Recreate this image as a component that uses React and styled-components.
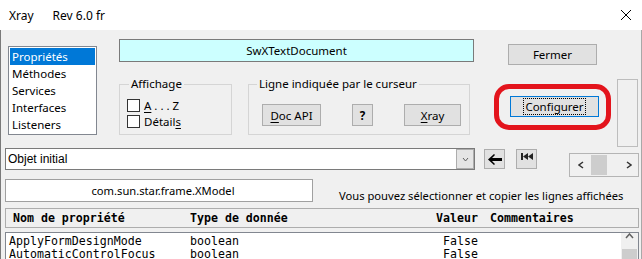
import React from "react";
import styled, { createGlobalStyle } from "styled-components";

const Global = createGlobalStyle`
  html, body { margin: 0; padding: 0; background: #f0f0f0; overflow: hidden; }
  body { font-family: "Noto Sans", "Open Sans", sans-serif; font-size: 11.5px; color: #000; }
  * { box-sizing: border-box; }
`;

const Window = styled.div`
  width: 642px;
  height: 259px;
  display: flex;
  flex-direction: column;
  overflow: hidden;
  background: #f0f0f0;
`;

const TitleBar = styled.div`
  height: 30px;
  flex: none;
  background: #fff;
  display: flex;
  align-items: center;
  padding-left: 9px;
  font-size: 12px;
`;

const TitleText = styled.span`
  margin-right: ${(p) => p.$gap || 0}px;
`;

const CloseIcon = styled.svg`
  margin-left: auto;
  margin-right: 11px;
  display: block;
`;

const Body = styled.div`
  flex: 1;
  border-left: 1px solid #7a7a7a;
  border-right: 1px solid #a8a8a8;
  display: flex;
  flex-direction: column;
`;

const TopSection = styled.div`
  display: flex;
  align-items: flex-start;
  height: 117px;
  flex: none;
`;

const ListBox = styled.div`
  margin: 16px 0 0 7px;
  width: 89px;
  height: 89px;
  background: #fff;
  border: 1px solid #828790;
  padding: 1px;
  display: flex;
  flex-direction: column;
`;

const ListItem = styled.div`
  height: 17.25px;
  line-height: 17px;
  padding-left: 2px;
  background: ${(p) => (p.$selected ? "#0078d7" : "transparent")};
  color: ${(p) => (p.$selected ? "#fff" : "#000")};
  white-space: nowrap;
`;

const MidCol = styled.div`
  margin-left: 22px;
  width: 356px;
  display: flex;
  flex-direction: column;
`;

const CyanField = styled.div`
  margin-top: 9px;
  width: 355px;
  height: 23px;
  background: #ccffff;
  border: 1px solid #7a7a7a;
  display: flex;
  align-items: center;
  justify-content: center;
`;

const GroupRow = styled.div`
  display: flex;
  gap: 16px;
  margin-top: 15px;
`;

const GroupBox = styled.fieldset`
  margin: 0;
  padding: 0 0 0 7px;
  border: 1px solid #d5d5d5;
  width: ${(p) => p.$w}px;
  height: 58px;
  min-width: 0;
`;

const Legend = styled.legend`
  padding: 0 2px;
  margin-left: ${(p) => p.$ml || 2}px;
  line-height: 14px;
  font-size: 11.5px;
`;

const CheckList = styled.div`
  padding-top: 6px;
  display: flex;
  flex-direction: column;
`;

const CheckRow = styled.div`
  display: flex;
  align-items: center;
  height: 16px;
  gap: 4px;
`;

const CheckBox = styled.span`
  width: 13px;
  height: 13px;
  border: 1px solid #333;
  background: #fff;
  flex: none;
`;

const U = styled.span`
  text-decoration: underline;
  text-underline-offset: 2px;
`;

const ButtonRow = styled.div`
  display: flex;
  justify-content: space-between;
  margin: 13px 0 0 6px;
  width: 199px;
`;

const Button = styled.div`
  width: ${(p) => p.$w}px;
  height: ${(p) => p.$h || 22}px;
  background: #e1e1e1;
  border: 1px solid ${(p) => (p.$focus ? "#0078d7" : "#adadad")};
  display: flex;
  align-items: center;
  justify-content: center;
  font-weight: ${(p) => (p.$bold ? 700 : 400)};
  white-space: nowrap;
`;

const RightCol = styled.div`
  margin-left: 33px;
  width: 91px;
  display: flex;
  flex-direction: column;
`;

const FermerWrap = styled.div`
  margin-top: 14px;
`;

const ConfigWrap = styled.div`
  position: relative;
  margin: 31px 0 0 2px;
`;

const FocusRect = styled.span`
  border: 1px dotted #000;
  padding: 0 1px;
  line-height: 15px;
`;

const RedRing = styled.div`
  position: absolute;
  left: -16px;
  top: -12px;
  width: 117px;
  height: 46px;
  border: 5px solid #e3141c;
  border-radius: 15px;
  pointer-events: none;
`;

const SidePanel = styled.div`
  margin: 49px 0 0 18px;
  width: 21px;
  height: 68px;
  border: 1px solid #bdbdbd;
  background: #f0f0f0;
`;

const Row = styled.div`
  display: flex;
  align-items: flex-start;
  height: ${(p) => p.$h}px;
  flex: none;
`;

const Combo = styled.div`
  margin: 1px 0 0 4px;
  width: 470px;
  height: 22px;
  background: #fff;
  border: 1px solid #7a7a7a;
  display: flex;
  align-items: center;
  font-family: "Liberation Sans", Arial, sans-serif;
  font-size: 12px;
`;

const ComboText = styled.span`
  padding-left: 2px;
  flex: 1;
`;

const ComboButton = styled.div`
  width: 18px;
  height: 20px;
  background: #e5e5e5;
  border: 1px solid #adadad;
  display: flex;
  align-items: center;
  justify-content: center;
`;

const IconButton = styled.div`
  margin: 2px 0 0 ${(p) => p.$ml}px;
  width: 21px;
  height: 20px;
  background: #e1e1e1;
  border: 1px solid #adadad;
  display: flex;
  justify-content: center;
  align-items: ${(p) => (p.$top ? "flex-start" : "center")};
  padding-top: ${(p) => (p.$top ? 3 : 0)}px;
`;

const HScroll = styled.div`
  margin: 6px 0 0 32px;
  width: 70px;
  height: 24px;
  border: 1px solid #b4b4b4;
  background: #f0f0f0;
  display: flex;
  align-items: center;
  padding-left: 8px;
`;

const Thumb = styled.div`
  margin-left: 7px;
  width: 16px;
  height: 20px;
  background: #cdcdcd;
`;

const ScrollChevron = styled.svg`
  display: block;
  margin-left: ${(p) => p.$ml || 0}px;
`;

const XModelField = styled.div`
  margin-left: 4px;
  width: 308px;
  height: 23px;
  background: #fff;
  border: 1px solid #a0a0a0;
  display: flex;
  align-items: center;
  justify-content: center;
  padding-left: 8px;
  font-size: 11.2px;
`;

const Hint = styled.div`
  margin: 10px 0 0 26px;
  line-height: 14px;
  font-size: 11.2px;
  white-space: nowrap;
`;

const Header = styled.div`
  margin: 0 0 0 4px;
  width: 634px;
  height: 20px;
  border: 1px solid #adadad;
  background: #f0f0f0;
  display: grid;
  grid-template-columns: 177px 230px 58px auto;
  align-items: center;
  padding-left: 7px;
  font-family: "DejaVu Sans Mono", monospace;
  font-size: 11.6px;
  font-weight: 700;
  flex: none;
`;

const Cell = styled.span`
  white-space: nowrap;
  text-align: ${(p) => (p.$right ? "right" : "left")};
  margin-left: ${(p) => p.$ml || 0}px;
`;

const Table = styled.div`
  margin: 4px 0 0 4px;
  width: 634px;
  height: 40px;
  border: 1px solid #828790;
  background: #fff;
  display: flex;
  flex: none;
`;

const Rows = styled.div`
  flex: 1;
  padding: 2px 0 0 3px;
  font-family: "DejaVu Sans Mono", monospace;
  font-size: 11.6px;
`;

const DataRow = styled.div`
  display: grid;
  grid-template-columns: 181px 230px 58px auto;
  height: 13px;
  line-height: 13px;
`;

const VScroll = styled.div`
  width: 17px;
  background: #f0f0f0;
  display: flex;
  flex-direction: column;
  align-items: center;
`;

const VThumb = styled.div`
  margin-top: 10px;
  width: 15px;
  height: 20px;
  background: #cdcdcd;
`;

const Chevron = ({ dir, w = 6, h = 8, color = "#333", sw = 1.4, ml }) => {
  const paths = {
    left: `M${w - 1} 1 L1 ${h / 2} L${w - 1} ${h - 1}`,
    right: `M1 1 L${w - 1} ${h / 2} L1 ${h - 1}`,
    down: `M1 1 L${w / 2} ${h - 1} L${w - 1} 1`,
    up: `M1 ${h - 1} L${w / 2} 1 L${w - 1} ${h - 1}`,
  };
  return (
    <ScrollChevron $ml={ml} width={w} height={h} viewBox={`0 0 ${w} ${h}`}>
      <path d={paths[dir]} fill="none" stroke={color} strokeWidth={sw} />
    </ScrollChevron>
  );
};

const items = ["Propriétés", "Méthodes", "Services", "Interfaces", "Listeners"];

const rows = [
  ["ApplyFormDesignMode", "boolean", "False"],
  ["AutomaticControlFocus", "boolean", "False"],
];

export default function App() {
  return (
    <>
      <Global />
      <Window>
        <TitleBar>
          <TitleText $gap={19}>Xray</TitleText>
          <TitleText>Rev 6.0 fr</TitleText>
          <CloseIcon width="10" height="10" viewBox="0 0 10 10">
            <path d="M0 0 L10 10 M10 0 L0 10" stroke="#000" strokeWidth="1" />
          </CloseIcon>
        </TitleBar>
        <Body>
          <TopSection>
            <ListBox>
              {items.map((it, i) => (
                <ListItem key={it} $selected={i === 0}>
                  {it}
                </ListItem>
              ))}
            </ListBox>
            <MidCol>
              <CyanField>SwXTextDocument</CyanField>
              <GroupRow>
                <GroupBox $w={113}>
                  <Legend>Affichage</Legend>
                  <CheckList>
                    <CheckRow>
                      <CheckBox />
                      <span>
                        <U>A</U> . . . Z
                      </span>
                    </CheckRow>
                    <CheckRow>
                      <CheckBox />
                      <span>
                        Détail<U>s</U>
                      </span>
                    </CheckRow>
                  </CheckList>
                </GroupBox>
                <GroupBox $w={222}>
                  <Legend $ml={1}>Ligne indiquée par le curseur</Legend>
                  <ButtonRow>
                    <Button $w={59}>
                      <span>
                        <U>D</U>oc API
                      </span>
                    </Button>
                    <Button $w={21} $bold>
                      ?
                    </Button>
                    <Button $w={57}>
                      <span>
                        <U>X</U>ray
                      </span>
                    </Button>
                  </ButtonRow>
                </GroupBox>
              </GroupRow>
            </MidCol>
            <RightCol>
              <FermerWrap>
                <Button $w={89} $h={21}>
                  Fermer
                </Button>
              </FermerWrap>
              <ConfigWrap>
                <Button $w={89} $h={21} $focus>
                  <FocusRect>Configurer</FocusRect>
                </Button>
                <RedRing />
              </ConfigWrap>
            </RightCol>
            <SidePanel />
          </TopSection>

          <Row $h={32}>
            <Combo>
              <ComboText>Objet initial</ComboText>
              <ComboButton>
                <Chevron dir="down" w={7} h={5} color="#606060" sw={1} />
              </ComboButton>
            </Combo>
            <IconButton $ml={9}>
              <svg width="14" height="11" viewBox="0 0 14 11">
                <path d="M0 5.5 L6 0 L7 1 L4 4 L14 4 L14 7 L4 7 L7 10 L6 11 Z" fill="#000" />
              </svg>
            </IconButton>
            <IconButton $ml={11} $top>
              <svg width="12" height="7" viewBox="0 0 12 7">
                <rect x="0" y="0" width="2" height="7" fill="#222" />
                <path d="M2 3.5 L7 0 L7 7 Z M7 3.5 L12 0 L12 7 Z" fill="#222" />
              </svg>
            </IconButton>
            <HScroll>
              <Chevron dir="left" w={6} h={8} color="#333" sw={1.5} />
              <Thumb />
              <Chevron dir="right" w={6} h={8} color="#333" sw={1.5} ml={19} />
            </HScroll>
          </Row>

          <Row $h={29}>
            <XModelField>com.sun.star.frame.XModel</XModelField>
            <Hint>Vous pouvez sélectionner et copier les lignes affichées</Hint>
          </Row>

          <Header>
            <Cell>Nom de propriété</Cell>
            <Cell>Type de donnée</Cell>
            <Cell $right>Valeur</Cell>
            <Cell $ml={12}>Commentaires</Cell>
          </Header>

          <Table>
            <Rows>
              {rows.map((r) => (
                <DataRow key={r[0]}>
                  <Cell>{r[0]}</Cell>
                  <Cell>{r[1]}</Cell>
                  <Cell $right>{r[2]}</Cell>
                  <Cell />
                </DataRow>
              ))}
            </Rows>
            <VScroll>
              <Chevron dir="up" w={9} h={6} color="#606060" sw={1.5} ml={0} />
              <VThumb />
            </VScroll>
          </Table>
        </Body>
      </Window>
    </>
  );
}
